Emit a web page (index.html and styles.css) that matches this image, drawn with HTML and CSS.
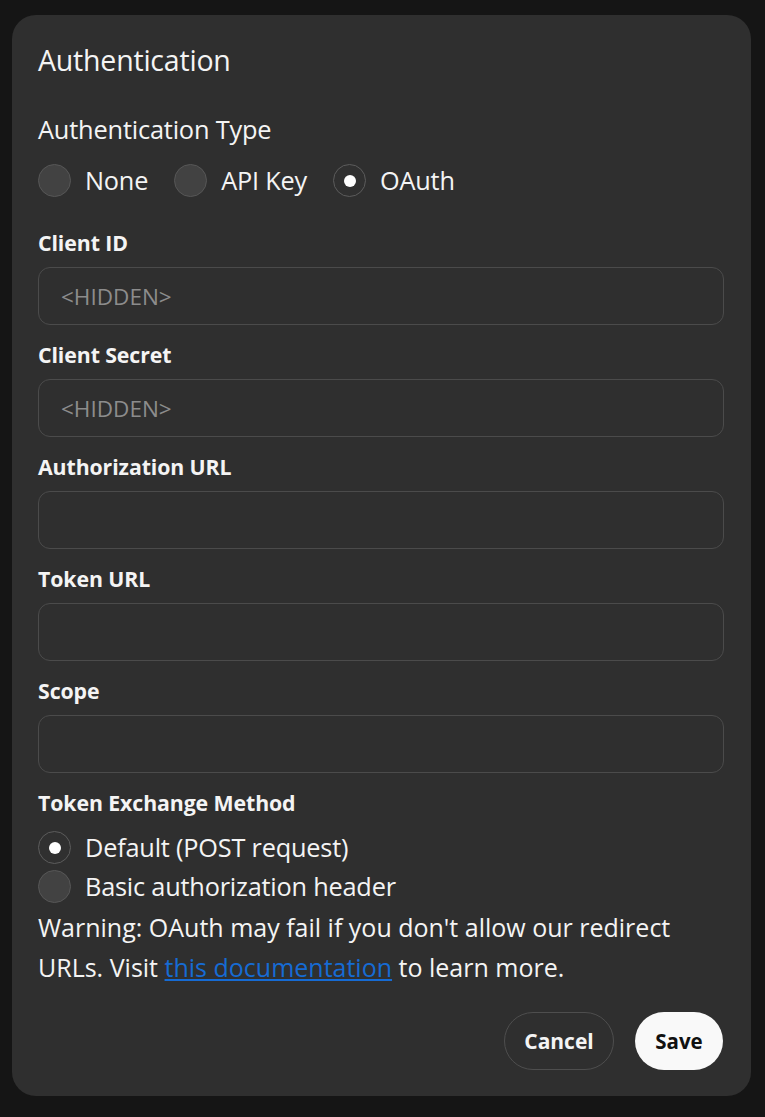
FILE: index.html
```html
<!DOCTYPE html>
<html lang="en">
<head>
<meta charset="utf-8">
<title>Authentication</title>
<link rel="stylesheet" href="styles.css">
</head>
<body>
<div class="backdrop">
  <div class="dialog">
    <h2 class="title">Authentication</h2>
    <div class="section-title">Authentication Type</div>
    <div class="radio-row">
      <label class="radio"><span class="dot"></span><span>None</span></label>
      <label class="radio"><span class="dot"></span><span>API Key</span></label>
      <label class="radio"><span class="dot checked"></span><span>OAuth</span></label>
    </div>
    <div class="fields">
      <div class="field">
        <div class="label">Client ID</div>
        <div class="input placeholder">&lt;HIDDEN&gt;</div>
      </div>
      <div class="field">
        <div class="label">Client Secret</div>
        <div class="input placeholder">&lt;HIDDEN&gt;</div>
      </div>
      <div class="field">
        <div class="label">Authorization URL</div>
        <div class="input"></div>
      </div>
      <div class="field">
        <div class="label">Token URL</div>
        <div class="input"></div>
      </div>
      <div class="field">
        <div class="label">Scope</div>
        <div class="input"></div>
      </div>
    </div>
    <div class="label method-label">Token Exchange Method</div>
    <div class="radio-col">
      <label class="radio"><span class="dot checked"></span><span>Default (POST request)</span></label>
      <label class="radio"><span class="dot"></span><span>Basic authorization header</span></label>
    </div>
    <p class="warning">Warning: OAuth may fail if you don't allow our redirect URLs. Visit <a href="#">this documentation</a> to learn more.</p>
    <div class="actions">
      <button class="btn cancel">Cancel</button>
      <button class="btn save">Save</button>
    </div>
  </div>
</div>
</body>
</html>
```
FILE: styles.css
```css
* { box-sizing: border-box; }
html, body { margin: 0; padding: 0; }
body {
  background: #151515;
  font-family: "Open Sans", "Noto Sans", sans-serif;
  color: #f4f4f4;
  width: 765px;
  height: 1117px;
  overflow: hidden;
}
.backdrop {
  padding: 15px 14px 0 12px;
}
.dialog {
  width: 739px;
  height: 1081px;
  background: #2f2f2f;
  border-radius: 24px;
  padding: 27px 27px 26px 26px;
  display: flex;
  flex-direction: column;
}
.title {
  margin: 0;
  font-size: 28.5px;
  font-weight: 400;
  line-height: 36px;
  letter-spacing: -0.2px;
}
.section-title {
  margin-top: 35px;
  font-size: 25.4px;
  line-height: 32px;
  letter-spacing: -0.2px;
}
.radio-row {
  margin-top: 19px;
  display: flex;
  gap: 26px;
  height: 33px;
}
.radio {
  display: flex;
  align-items: center;
  gap: 14px;
  font-size: 25.3px;
  line-height: 33px;
  height: 33px;
  letter-spacing: -0.2px;
}
.dot {
  width: 33px;
  height: 33px;
  border-radius: 50%;
  background: #424242;
  border: 1px solid #575757;
  display: flex;
  align-items: center;
  justify-content: center;
  flex: none;
}
.dot.checked {
  background: #303030;
  border-color: #5c5c5c;
}
.dot.checked::after {
  content: "";
  width: 12px;
  height: 12px;
  border-radius: 50%;
  background: #ffffff;
}
.fields {
  margin-top: 32px;
  display: flex;
  flex-direction: column;
  gap: 16px;
}
.field {
  display: flex;
  flex-direction: column;
  gap: 10px;
}
.label {
  font-size: 21.3px;
  font-weight: 700;
  line-height: 28px;
  letter-spacing: -0.1px;
}
.input {
  height: 58px;
  border: 1px solid #4b4b4b;
  border-radius: 12px;
  padding: 0 22px;
  display: flex;
  align-items: center;
  font-size: 22.5px;
}
.input.placeholder { color: #8c8c8c; }
.method-label { margin-top: 16px; }
.radio-col {
  margin-top: 14px;
  display: flex;
  flex-direction: column;
  gap: 6px;
}
.warning {
  margin: 4px 0 0;
  font-size: 25px;
  line-height: 40px;
}
.warning a {
  color: #166bd4;
  text-decoration: underline;
}
.actions {
  margin-top: 25px;
  display: flex;
  justify-content: flex-end;
  gap: 21px;
  padding-right: 1px;
}
.btn {
  height: 58px;
  border-radius: 29px;
  font-family: inherit;
  font-size: 21px;
  font-weight: 700;
  cursor: pointer;
}
.cancel {
  width: 110px;
  background: transparent;
  color: #f4f4f4;
  border: 1px solid #4e4e4e;
}
.save {
  width: 88px;
  background: #f9f9f9;
  color: #111111;
  border: none;
  font-size: 20.5px;
}
```
